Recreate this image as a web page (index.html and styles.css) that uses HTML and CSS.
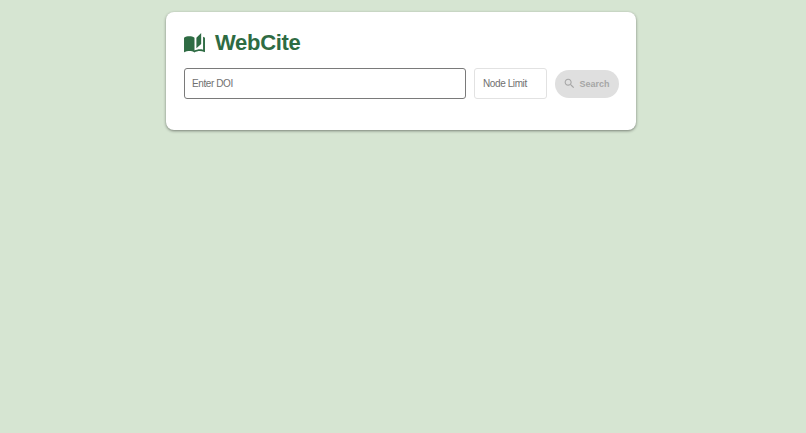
FILE: index.html
```html
<!DOCTYPE html>
<html lang="en">
<head>
    <meta charset="UTF-8">
    <meta name="viewport" content="width=device-width, initial-scale=1.0">
    <title>WebCite</title>
    <link rel="stylesheet" href="styles.css">
</head>
<body>
    <div class="search-card">
        <div class="brand">
            <svg class="brand-icon" viewBox="1 1 22 21" fill="#2e6b43">
                <path d="M19 1l-5 5v11l5-4.500V1zM1 6v14.650c0 .25.25.5.5.5.1 0 .15-.05.25-.05C3.100 20.450 5.050 20 6.500 20c1.950 0 4.050.4 5.500 1.500V6c-1.450-1.100-3.550-1.500-5.500-1.500S2.450 4.900 1 6zm22 13.500V6c-.6-.45-1.250-.75-2-1v13.500c-1.100-.35-2.300-.5-3.500-.5-1.700 0-4.150.65-5.500 1.500v2c1.350-.85 3.800-1.500 5.500-1.500 1.650 0 3.350.3 4.750 1.050.1.05.15.05.25.05.25 0 .5-.25.5-.5v-1.100z"/>
            </svg>
            <h1 class="brand-name">WebCite</h1>
        </div>
        <div class="search-row">
            <input class="field field-doi" type="text" placeholder="Enter DOI">
            <input class="field field-limit" type="text" placeholder="Node Limit">
            <button class="search-btn" disabled>
                <svg class="search-icon" viewBox="0 0 24 24" fill="#a6a6a6">
                    <path d="M15.500 14h-.79l-.28-.27C15.410 12.590 16 11.110 16 9.500 16 5.910 13.090 3 9.500 3S3 5.910 3 9.500 5.910 16 9.500 16c1.610 0 3.090-.59 4.230-1.570l.27.28v.79l5 4.990L20.490 19l-4.990-5zm-6 0C7.010 14 5 11.990 5 9.500S7.010 5 9.500 5 14 7.010 14 9.500 11.990 14 9.500 14z"/>
                </svg>
                Search
            </button>
        </div>
    </div>
</body>
</html>
```

FILE: styles.css
```css
body {
    font-family: "Liberation Sans", Arial, sans-serif;
    margin: 0;
    height: 433px;
    overflow: hidden;
    background-color: #d6e5d2;
}
.search-card {
    width: 470px;
    height: 118px;
    box-sizing: border-box;
    margin: 12px 0 0 166px;
    padding: 18px 17px 0 18px;
    background: white;
    border-radius: 8px;
    box-shadow: 0 1px 3px rgba(0,0,0,0.45);
}
.brand {
    display: flex;
    align-items: center;
    gap: 10px;
    height: 26px;
}
.brand-icon {
    width: 21px;
    height: 20px;
}
.brand-name {
    margin: 0;
    font-size: 22px;
    font-weight: bold;
    letter-spacing: -0.3px;
    color: #2e6b43;
}
.search-row {
    display: flex;
    align-items: center;
    gap: 8px;
    margin-top: 12px;
}
.field {
    flex-shrink: 0;
    box-sizing: border-box;
    height: 31px;
    padding: 0 8px;
    background: white;
    border-radius: 3px;
    font-family: inherit;
    font-size: 10px;
    letter-spacing: -0.4px;
    outline: none;
}
.field::placeholder {
    color: #707070;
    opacity: 1;
}
.field-doi {
    width: 282px;
    padding-left: 7px;
    border: 1px solid #7a7a7a;
}
.field-limit {
    width: 73px;
    border: 1px solid #e2e2e2;
}
.search-btn {
    flex-shrink: 0;
    display: flex;
    align-items: center;
    justify-content: center;
    gap: 3px;
    width: 64px;
    height: 28px;
    padding: 0 1px 0 0;
    border: none;
    border-radius: 14px;
    background-color: #dfdfdf;
    color: #a6a6a6;
    font-family: inherit;
    font-size: 9px;
    font-weight: bold;
}
.search-icon {
    width: 13px;
    height: 13px;
}
```
